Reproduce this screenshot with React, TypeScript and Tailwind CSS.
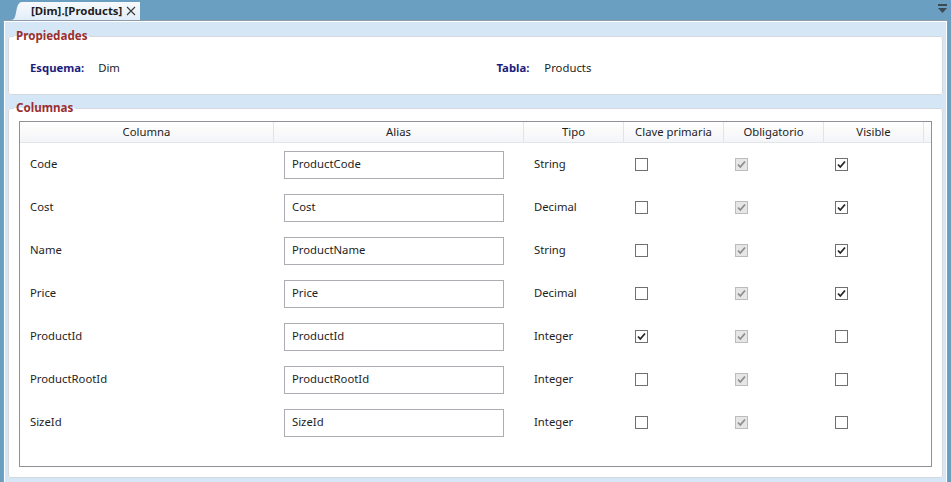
import React from 'react';

interface ColumnRow {
  name: string;
  alias: string;
  type: string;
  primaryKey: boolean;
  visible: boolean;
}

const rows: ColumnRow[] = [
  { name: 'Code', alias: 'ProductCode', type: 'String', primaryKey: false, visible: true },
  { name: 'Cost', alias: 'Cost', type: 'Decimal', primaryKey: false, visible: true },
  { name: 'Name', alias: 'ProductName', type: 'String', primaryKey: false, visible: true },
  { name: 'Price', alias: 'Price', type: 'Decimal', primaryKey: false, visible: true },
  { name: 'ProductId', alias: 'ProductId', type: 'Integer', primaryKey: true, visible: false },
  { name: 'ProductRootId', alias: 'ProductRootId', type: 'Integer', primaryKey: false, visible: false },
  { name: 'SizeId', alias: 'SizeId', type: 'Integer', primaryKey: false, visible: false },
];

const headers = ['Columna', 'Alias', 'Tipo', 'Clave primaria', 'Obligatorio', 'Visible'];

const gridCols = 'grid grid-cols-[254px_250px_100px_100px_100px_100px_1fr]';

const CheckBox: React.FC<{ checked: boolean; disabled?: boolean }> = ({ checked, disabled }) => (
  <div
    className={`w-[13px] h-[13px] border flex items-center justify-center ${
      disabled ? 'border-[#bcbcbc] bg-[#e6e6e6]' : 'border-[#707070] bg-white'
    }`}
  >
    {checked && (
      <svg width="11" height="11" viewBox="0 0 11 11">
        <path
          d="M2 5.5 L4.3 8 L9 2.5"
          fill="none"
          stroke={disabled ? '#8d8d8d' : '#262626'}
          strokeWidth="1.8"
        />
      </svg>
    )}
  </div>
);

const TabBar = () => (
  <div className="h-[20px] flex items-end justify-between pl-[11px] pr-[4px]">
    <div className="flex items-end h-[18px]">
      <svg width="11" height="18" viewBox="0 0 11 18" className="block">
        <defs>
          <linearGradient id="tabg" x1="0" y1="0" x2="0" y2="1">
            <stop offset="0" stopColor="#f7fafd" />
            <stop offset="1" stopColor="#e2edf8" />
          </linearGradient>
        </defs>
        <path d="M0 18 C4 18 4.5 13 5.5 8 C6.5 3 8 0 11 0 L11 18 Z" fill="url(#tabg)" />
      </svg>
      <div className="h-[18px] flex items-center pl-[9px] pr-[4px] bg-linear-to-b from-[#f7fafd] to-[#e2edf8]">
        <span className="font-bold text-[11.4px] text-[#1e1e1e]">[Dim].[Products]</span>
        <svg width="10" height="10" viewBox="0 0 10 10" className="ml-[4px]">
          <path d="M1 1 L9 9 M9 1 L1 9" stroke="#3a3a3a" strokeWidth="1.1" />
        </svg>
      </div>
    </div>
    <svg width="9" height="10" viewBox="0 0 9 10" className="mb-[6px]">
      <rect x="0" y="0" width="9" height="2" fill="#3c4a55" />
      <path d="M0 4 L9 4 L4.5 9 Z" fill="#3c4a55" />
    </svg>
  </div>
);

export default function App() {
  return (
    <div className="w-[951px] h-[482px] bg-[#6b9fc1] flex flex-col overflow-hidden font-['Noto_Sans','Liberation_Sans',sans-serif] text-[11.3px] text-[#1e1e1e]">
      <TabBar />
      <div className="flex-1 mx-[3px] border border-[#8b9caf] border-b-0 flex flex-col">
        <div className="flex-1 border border-white border-b-0 bg-[#d5e6f7] flex flex-col px-[3px] pt-[7px] gap-[6px]">
          <fieldset className="border border-[#d3d8de] rounded-[3px] bg-white">
            <legend className="ml-[5px] px-[2px] font-bold text-[11.6px] leading-[14px] text-[#9b2f2f]">
              Propiedades
            </legend>
            <div className="grid grid-cols-2 h-[51px] items-center">
              <div className="flex gap-[14px] pl-[21px]">
                <span className="font-bold text-[#1c1c7e]">Esquema:</span>
                <span>Dim</span>
              </div>
              <div className="flex gap-[15px] pl-[21px]">
                <span className="font-bold text-[#1c1c7e]">Tabla:</span>
                <span>Products</span>
              </div>
            </div>
          </fieldset>

          <fieldset className="flex-1 border border-[#d3d8de] rounded-[3px] bg-white mb-[4px]">
            <legend className="ml-[5px] px-[2px] font-bold text-[11.6px] leading-[14px] text-[#9b2f2f]">
              Columnas
            </legend>
            <div className="px-[10px] pt-[6px] pb-[10px] h-full">
              <div className="border border-[#8e9196] h-[346px]">
                <div className={`${gridCols} h-[21px] bg-linear-to-b from-white to-[#f4f5f7] border-b border-[#e2e5ea]`}>
                  {headers.map((h) => (
                    <div key={h} className="flex items-center justify-center border-r border-[#e2e4ea]">
                      {h}
                    </div>
                  ))}
                  <div />
                </div>
                {rows.map((r) => (
                  <div key={r.name} className={`${gridCols} h-[43px] items-center`}>
                    <div className="pl-[10px]">{r.name}</div>
                    <div className="pl-[10px]">
                      <div className="w-[220px] h-[28px] border border-[#abadb3] flex items-center pl-[7px]">
                        {r.alias}
                      </div>
                    </div>
                    <div className="pl-[10px]">{r.type}</div>
                    <div className="pl-[11px]">
                      <CheckBox checked={r.primaryKey} />
                    </div>
                    <div className="pl-[11px]">
                      <CheckBox checked disabled />
                    </div>
                    <div className="pl-[11px]">
                      <CheckBox checked={r.visible} />
                    </div>
                    <div />
                  </div>
                ))}
              </div>
            </div>
          </fieldset>
        </div>
      </div>
    </div>
  );
}
